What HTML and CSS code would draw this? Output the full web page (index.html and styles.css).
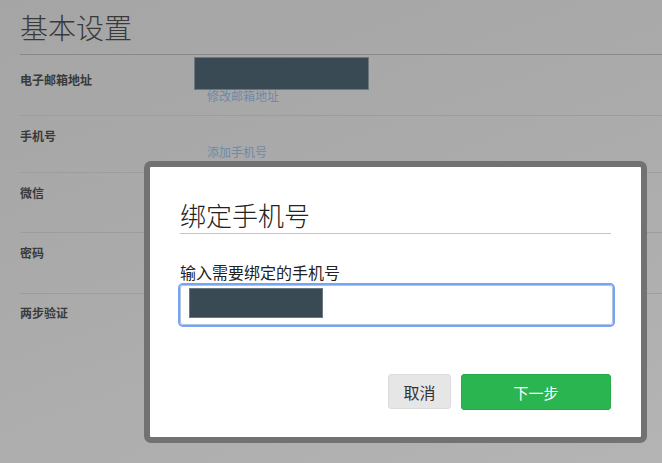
FILE: index.html
```html
<!DOCTYPE html>
<html lang="zh-CN">
<head>
  <meta charset="UTF-8" />
  <title>基本设置</title>
  <link rel="stylesheet" href="styles.css">
</head>
<body>
  <div class="page">
    <h1 class="page-title">基本设置</h1>

    <div class="row row-email">
      <div class="label">电子邮箱地址</div>
      <div class="value">
        <div class="redact redact-email"></div>
        <a class="link link-email" href="#">修改邮箱地址</a>
      </div>
    </div>

    <div class="row row-phone">
      <div class="label">手机号</div>
      <div class="value">
        <a class="link" href="#">添加手机号</a>
      </div>
    </div>

    <div class="row row-wechat">
      <div class="label">微信</div>
      <div class="value"></div>
    </div>

    <div class="row row-password">
      <div class="label">密码</div>
      <div class="value"></div>
    </div>

    <div class="row row-last">
      <div class="label">两步验证</div>
      <div class="value"></div>
    </div>
  </div>

  <div class="modal">
    <h2 class="modal-title">绑定手机号</h2>
    <label class="field-label" for="phone">输入需要绑定的手机号</label>
    <div class="input" id="phone">
      <div class="redact redact-phone"></div>
    </div>
    <div class="actions">
      <button class="btn btn-cancel">取消</button>
      <button class="btn btn-next">下一步</button>
    </div>
  </div>
</body>
</html>
```

FILE: styles.css
```css
html, body {
  margin: 0;
  height: 100%;
}
body {
  font-family: "Noto Sans CJK SC", "Noto Sans", sans-serif;
  background: linear-gradient(160deg, #a5a5a5 0%, #ababab 50%, #b4b4b4 100%);
  overflow: hidden;
  position: relative;
}
.page {
  padding-left: 20px;
}
.page-title {
  margin: 0;
  padding-top: 10px;
  padding-bottom: 10px;
  font-size: 28px;
  line-height: 34px;
  font-weight: 300;
  color: #3a3a3a;
  border-bottom: 1px solid #8a8a8a;
}
.row {
  display: grid;
  grid-template-columns: 187px 1fr;
  border-bottom: 1px solid #9d9d9d;
  box-sizing: border-box;
}
.row-email { height: 61px; }
.row-phone { height: 57px; }
.row-wechat { height: 60px; }
.row-password { height: 61px; }
.row-last { border-bottom: none; }
.label {
  font-size: 12px;
  line-height: 18px;
  font-weight: bold;
  color: #3a3a3a;
  padding-top: 11px;
}
.row-email .label { padding-top: 16px; }
.row-last .label { padding-top: 10px; }
.value {
  font-size: 12px;
  line-height: 18px;
}
.row-phone .value { padding-top: 27px; }
.link {
  color: #6e8aa8;
  text-decoration: none;
  display: block;
}
.redact {
  background: #394a55;
  border: 1px solid #6b7880;
  box-sizing: border-box;
}
.redact-email {
  margin-left: -13px;
  margin-top: 2px;
  width: 175px;
  height: 33px;
}
.link-email {
  margin-top: -3px;
}

.modal {
  position: absolute;
  left: 144px;
  top: 161px;
  width: 431px;
  height: 270px;
  padding: 0 30px;
  background: #fff;
  border: 6px solid #727272;
  border-radius: 7px;
}
.modal-title {
  margin: 30px 0 0;
  font-size: 26px;
  line-height: 36px;
  font-weight: 300;
  color: #222;
  border-bottom: 1px solid #c4c4c4;
}
.field-label {
  display: block;
  margin-top: 27px;
  font-size: 16px;
  line-height: 22px;
  color: #222;
}
.input {
  margin-top: 2px;
  height: 40px;
  width: 433px;
  box-sizing: border-box;
  border: 1px solid #b4c3dc;
  border-radius: 3px;
  box-shadow: 0 0 0 2px #76a4f6;
  padding: 2px 8px;
}
.redact-phone {
  width: 134px;
  height: 30px;
}
.actions {
  display: flex;
  justify-content: flex-end;
  gap: 10px;
  margin-top: 49px;
}
.btn {
  font-family: "Noto Sans CJK SC", "Noto Sans", sans-serif;
  font-size: 16px;
  height: 36px;
  border-radius: 3px;
  cursor: pointer;
}
.btn-cancel {
  width: 63px;
  height: 35px;
  background: #e6e6e6;
  border: 1px solid #dcdcdc;
  color: #333;
}
.btn-next {
  width: 150px;
  background: #2bb551;
  border: 1px solid #27a849;
  color: #fff;
  font-size: 15px;
}
```
